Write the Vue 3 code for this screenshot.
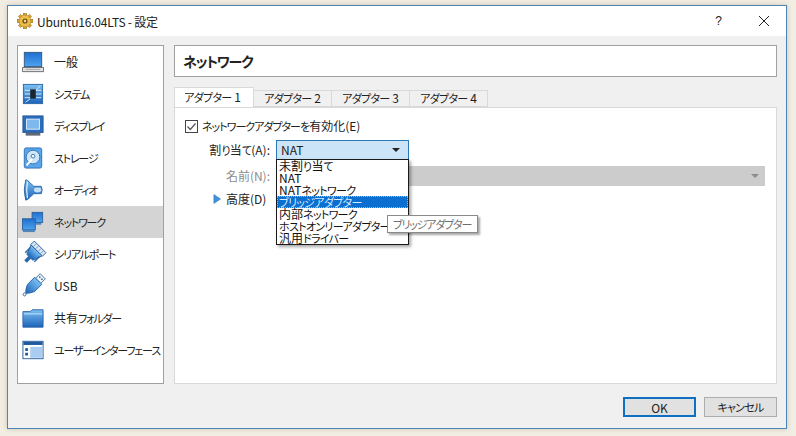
<script setup>
const sections = [
  { id: 'general', label: '一般' },
  { id: 'system', label: 'システム' },
  { id: 'display', label: 'ディスプレイ' },
  { id: 'storage', label: 'ストレージ' },
  { id: 'audio', label: 'オーディオ' },
  { id: 'network', label: 'ネットワーク', active: true },
  { id: 'serial', label: 'シリアルポート' },
  { id: 'usb', label: 'USB' },
  { id: 'shared', label: '共有フォルダー' },
  { id: 'ui', label: 'ユーザーインターフェース' }
]
const tabs = ['アダプター 1', 'アダプター 2', 'アダプター 3', 'アダプター 4']
const options = ['未割り当て', 'NAT', 'NATネットワーク', 'ブリッジアダプター', '内部ネットワーク', 'ホストオンリーアダプター', '汎用ドライバー']

// kana is much narrower than kanji in the original UI font
const runs = (text) => text.match(/[\u3040-\u30ff]+|[^\u3040-\u30ff]+/g).map((t) => ({ t, kana: /[\u3040-\u30ff]/.test(t) }))
</script>

<template>
  <div class="desktop">
    <div class="window">
      <div class="titlebar">
        <svg class="gear" viewBox="0 0 16 16">
          <g fill="#e2a62a" stroke="#8a5f14" stroke-width=".5">
            <rect x="6.4" y="0.2" width="3.2" height="3" />
            <rect x="6.4" y="12.8" width="3.2" height="3" />
            <rect x="0.2" y="6.4" width="3" height="3.2" />
            <rect x="12.8" y="6.4" width="3" height="3.2" />
            <rect x="2" y="2" width="3" height="3" transform="rotate(45 3.5 3.5)" />
            <rect x="11" y="2" width="3" height="3" transform="rotate(45 12.5 3.5)" />
            <rect x="2" y="11" width="3" height="3" transform="rotate(45 3.5 12.5)" />
            <rect x="11" y="11" width="3" height="3" transform="rotate(45 12.5 12.5)" />
          </g>
          <circle cx="8" cy="8" r="6" fill="#edbd4a" stroke="#a87a1e" stroke-width=".6" />
          <circle cx="8" cy="8" r="2.6" fill="#7a5416" />
          <circle cx="8" cy="8" r="1.2" fill="#f0dfae" />
        </svg>
        <span class="title">Ubuntu16.04LTS - 設定</span>
        <span class="help">?</span>
        <svg class="close" viewBox="0 0 12 12">
          <path d="M1 1 L11 11 M11 1 L1 11" stroke="#222" stroke-width="1" fill="none" />
        </svg>
      </div>

      <div class="body">
        <div class="main">
          <ul class="sidebar">
            <li v-for="s in sections" :key="s.id" class="side-row" :class="{ active: s.active }">
              <svg class="side-icon" viewBox="0 0 24 24">
                <defs>
                  <linearGradient :id="'g-' + s.id" x1="0" y1="0" x2="0" y2="1">
                    <stop offset="0" stop-color="#7cc0f2" />
                    <stop offset="1" stop-color="#1c62b8" />
                  </linearGradient>
                  <linearGradient :id="'s-' + s.id" x1="0" y1="0" x2="0" y2="1">
                    <stop offset="0" stop-color="#1f6fd0" />
                    <stop offset="1" stop-color="#4da3f0" />
                  </linearGradient>
                </defs>
                <template v-if="s.id === 'general'">
                  <rect x="2.5" y="1.5" width="19" height="15.5" :fill="'url(#s-' + s.id + ')'" stroke="#35587c" />
                  <path d="M.5 18 H23.5 V22.5 H.5 Z" fill="#e2e4e5" stroke="#666" />
                  <path d="M4 20 H20" stroke="#9a9fa4" />
                </template>
                <template v-else-if="s.id === 'system'">
                  <rect x="1.5" y="1.5" width="21" height="21" :fill="'url(#g-' + s.id + ')'" stroke="#2a66a8" />
                  <path d="M3 8 H9 M3 12 H9 M3 16 H9 M15 8 H21 M15 12 H21 M15 16 H21 M15 8 L20 3 M9 17 L4 21" stroke="#e4f2fc" stroke-width="1" />
                  <rect x="9" y="7" width="6" height="10" fill="#1c2630" />
                </template>
                <template v-else-if="s.id === 'display'">
                  <rect x="1" y="1" width="22" height="18" fill="#2a6cc0" stroke="#26568e" />
                  <rect x="5" y="4.5" width="14" height="11" fill="#7db8ee" stroke="#e8f2fb" />
                  <path d="M4 19.5 H20 V22.5 H4 Z" fill="#5f6a76" />
                </template>
                <template v-else-if="s.id === 'storage'">
                  <rect x="2.5" y="1" width="19" height="22" rx="2" fill="#5aa6ea" stroke="#2a6cb0" />
                  <circle cx="12" cy="11" r="7.5" fill="#cfe6f8" stroke="#2c6fb2" />
                  <circle cx="12" cy="10" r="2" fill="#fff" stroke="#2c6fb2" />
                  <path d="M5 20 L11 13" stroke="#fff" stroke-width="2.2" />
                </template>
                <template v-else-if="s.id === 'audio'">
                  <path d="M4 1 C7 1 11 7 13 8 H21 Q23 12 21 16 H13 C11 17 7 23 4 23 Q1 12 4 1 Z" :fill="'url(#g-' + s.id + ')'" stroke="#2a66a8" />
                  <path d="M6 3 Q4 12 6 21" stroke="#cfe6f8" stroke-width="1.5" fill="none" />
                  <ellipse cx="17" cy="12" rx="4" ry="2.6" fill="#c5e0f6" />
                </template>
                <template v-else-if="s.id === 'network'">
                  <rect x="11" y="1.5" width="11.5" height="11" :fill="'url(#s-' + s.id + ')'" stroke="#2a5f9a" />
                  <rect x=".5" y="8.5" width="14" height="12" :fill="'url(#s-' + s.id + ')'" stroke="#2a5f9a" />
                  <path d="M1 20.5 H14 V23 H1 Z" fill="#4f86be" />
                  <path d="M15 13 H21 V15 H15 Z" fill="#4f86be" />
                </template>
                <template v-else-if="s.id === 'serial'">
                  <g transform="rotate(45 12 12)">
                    <rect x="3" y="1" width="18" height="5.5" fill="#dbe7f1" stroke="#2a66a8" />
                    <path d="M6.5 1.5 V6 M10 1.5 V6 M14 1.5 V6 M17.5 1.5 V6" stroke="#5a86b0" stroke-width=".8" />
                    <path d="M3.5 6.5 H20.5 L16.5 17 H7.5 Z" :fill="'url(#g-' + s.id + ')'" stroke="#2a66a8" />
                    <rect x="10" y="17" width="4" height="6.5" fill="#2a66a8" />
                    <path d="M5 9 V17 M19 9 V17" stroke="#2a66a8" stroke-width="1.6" />
                  </g>
                </template>
                <template v-else-if="s.id === 'usb'">
                  <g transform="rotate(45 12 12)">
                    <rect x="8" y="-3" width="8" height="7" fill="#f2f5f8" stroke="#44709c" />
                    <rect x="9.5" y="-1" width="1.8" height="1.8" fill="#44709c" />
                    <rect x="12.7" y="-1" width="1.8" height="1.8" fill="#44709c" />
                    <path d="M6.5 4 H17.5 V15 Q15 21 12 23 Q9 21 6.5 15 Z" :fill="'url(#g-' + s.id + ')'" stroke="#2a66a8" />
                    <circle cx="12" cy="25" r="1.6" fill="#fff" stroke="#2a66a8" />
                  </g>
                </template>
                <template v-else-if="s.id === 'shared'">
                  <path d="M1 5 V22 H23 V3 H11 L9 5 Z" :fill="'url(#g-' + s.id + ')'" stroke="#2a66a8" />
                  <path d="M2 7.5 H22" stroke="#cfe8fa" stroke-width="1" />
                </template>
                <template v-else>
                  <rect x="1" y="2.5" width="22" height="19" fill="#fff" stroke="#1f5a9e" />
                  <rect x="1.5" y="3" width="21" height="3.5" fill="#1f5a9e" />
                  <rect x="9" y="8.5" width="13" height="12" fill="#a9cdf2" />
                  <rect x="3.5" y="10" width="3" height="3" fill="#1f5a9e" />
                  <rect x="3.5" y="15" width="3" height="3" fill="#1f5a9e" />
                </template>
              </svg>
              <span class="side-label"><span v-for="r in runs(s.label)" :key="r.t" :class="{ kana: r.kana }">{{ r.t }}</span></span>
            </li>
          </ul>

          <div class="content">
            <div class="page-title">ネットワーク</div>
            <div class="tabs">
              <div v-for="(t, i) in tabs" :key="t" class="tab" :class="{ current: i === 0 }">
                <span v-for="r in runs(t)" :key="r.t" :class="{ kana: r.kana }">{{ r.t }}</span>
              </div>
            </div>
            <div class="pane">
              <label class="enable">
                <svg class="check" viewBox="0 0 13 13">
                  <rect x=".5" y=".5" width="12" height="12" fill="#fff" stroke="#444" />
                  <path d="M2.5 6.5 L5.3 9.5 L10.5 3.5" fill="none" stroke="#555" stroke-width="1.2" />
                </svg>
                <span class="lift"><span class="kana">ネットワークアダプターを</span>有効化(E)</span>
              </label>
              <div class="field attach">
                <span class="field-label">割<span class="kana">り</span>当<span class="kana">て</span>(A):</span>
                <div class="combo">
                  <span class="lift">NAT</span>
                  <i class="caret"></i>
                </div>
              </div>
              <div class="field name">
                <span class="field-label muted">名前(N):</span>
                <div class="combo-off"><i class="caret off"></i></div>
              </div>
              <div class="advanced">
                <svg class="tri" viewBox="0 0 9 11">
                  <path d="M1 .5 L8.5 5.5 L1 10.5 Z" fill="#3f93dc" stroke="#2a6fb0" stroke-width=".6" />
                </svg>
                <span class="lift">高度(D)</span>
              </div>

              <ul class="dropdown">
                <li v-for="(o, i) in options" :key="o" :class="{ hover: i === 3 }">
                  <span v-for="(r, j) in runs(o)" :key="j" :class="{ kana: r.kana }">{{ r.t }}</span>
                </li>
              </ul>
              <div class="tooltip"><span class="kana">ブリッジアダプター</span></div>
            </div>
          </div>
        </div>

        <div class="buttons">
          <button class="btn default">OK</button>
          <button class="btn"><span class="kana">キャンセル</span></button>
        </div>
      </div>
    </div>
  </div>
</template>

<style>
html, body {
  margin: 0;
  background: #f3eee4;
}
</style>

<style scoped>
.desktop {
  width: 796px;
  height: 436px;
  box-sizing: border-box;
  padding: 5px 9px 7px 7px;
  background: #f3eee4;
  font-family: "Noto Sans CJK JP", "Liberation Sans", sans-serif;
  font-feature-settings: "palt";
  font-size: 12px;
  color: #222;
  overflow: hidden;
}
.kana {
  font-size: 11px;
  letter-spacing: -0.7px;
}
.lift {
  padding-bottom: 2px;
}
.window {
  height: 100%;
  box-sizing: border-box;
  border: 1px solid #4a86b8;
  background: #f0f0f0;
  display: flex;
  flex-direction: column;
  box-shadow: 0 0 5px rgba(110, 95, 65, 0.3);
}
.titlebar {
  height: 30px;
  flex: none;
  background: #fff;
  display: flex;
  align-items: center;
  padding-left: 9px;
}
.gear {
  width: 16px;
  height: 16px;
  margin-right: 4px;
}
.title {
  flex: 1;
  font-size: 12px;
  letter-spacing: -0.2px;
}
.help {
  font-family: "Liberation Sans", sans-serif;
  font-size: 12px;
  margin-right: 36px;
}
.close {
  width: 12px;
  height: 12px;
  margin-right: 16px;
}
.body {
  flex: 1;
  display: flex;
  flex-direction: column;
  padding: 9px 9px 11px;
  min-height: 0;
}
.main {
  flex: 1;
  display: flex;
  gap: 10px;
  min-height: 0;
}
.sidebar {
  list-style: none;
  margin: 0;
  padding: 0;
  width: 147px;
  box-sizing: border-box;
  flex: none;
  background: #fff;
  border: 1px solid #a0a0a0;
}
.side-row {
  height: 32px;
  display: flex;
  align-items: center;
  padding-left: 4px;
}
.side-row.active {
  background: #d4d4d4;
}
.side-icon {
  width: 22px;
  height: 22px;
  flex: none;
  margin-right: 10px;
  overflow: visible;
}
.side-label {
  font-size: 12px;
  white-space: nowrap;
  padding-bottom: 2px;
}
.side-label .kana {
  letter-spacing: -1.2px;
}
.content {
  flex: 1;
  display: flex;
  flex-direction: column;
  min-width: 0;
}
.page-title {
  height: 32px;
  box-sizing: border-box;
  background: #fff;
  border: 1px solid #a0a0a0;
  display: flex;
  align-items: center;
  padding-left: 8px;
  font-size: 14px;
  font-weight: 700;
  letter-spacing: -1.2px;
  flex: none;
}
.tabs {
  display: flex;
  margin-top: 11px;
  height: 19px;
  flex: none;
  align-items: flex-end;
  position: relative;
  z-index: 1;
}
.tab {
  width: 78px;
  height: 17px;
  box-sizing: border-box;
  background: #f0f0f0;
  border: 1px solid #d9d9d9;
  border-left: none;
  text-align: center;
  font-size: 12px;
  line-height: 14px;
  white-space: nowrap;
}
.tab.current {
  width: 80px;
  height: 20px;
  padding-right: 3px;
  background: #fff;
  border: 1px solid #d9d9d9;
  border-bottom: none;
  line-height: 17px;
}
.pane {
  flex: 1;
  position: relative;
  background: #fff;
  border: 1px solid #d9d9d9;
  box-sizing: border-box;
  padding: 10px 11px 0 10px;
}
.enable {
  display: flex;
  align-items: center;
  gap: 4px;
  height: 16px;
  font-size: 12px;
}
.enable .kana {
  letter-spacing: -1px;
}
.check {
  width: 13px;
  height: 13px;
}
.field {
  display: flex;
  align-items: center;
  height: 20px;
}
.attach {
  margin-top: 6px;
}
.name {
  margin-top: 6px;
}
.field-label {
  width: 91px;
  flex: none;
  text-align: right;
  padding: 0 6px 2px 0;
  box-sizing: border-box;
  font-size: 12px;
  white-space: nowrap;
}
.muted {
  color: #8c8c8c;
}
.combo {
  width: 133px;
  height: 20px;
  box-sizing: border-box;
  border: 1px solid #2a7ab8;
  background: #cce4f7;
  display: flex;
  align-items: center;
  justify-content: space-between;
  padding: 0 8px 0 4px;
  font-size: 12px;
}
.combo-off {
  flex: 1;
  height: 20px;
  background: #cccccc;
  display: flex;
  align-items: center;
  justify-content: flex-end;
  padding-right: 6px;
}
.caret {
  width: 0;
  height: 0;
  border-left: 4px solid transparent;
  border-right: 4px solid transparent;
  border-top: 4px solid #222;
}
.caret.off {
  border-top-color: #8c8c8c;
}
.advanced {
  display: flex;
  align-items: center;
  margin-top: 5px;
  padding-left: 28px;
  gap: 5px;
  height: 16px;
  font-size: 12px;
}
.tri {
  width: 8px;
  height: 10px;
}
.dropdown {
  position: absolute;
  left: 101px;
  top: 51px;
  width: 133px;
  height: 86px;
  margin: 0;
  padding: 0;
  list-style: none;
  box-sizing: border-box;
  background: #fff;
  border: 1px solid #1a1a1a;
  box-shadow: 2px 2px 3px rgba(0, 0, 0, 0.35);
  font-size: 12px;
  color: #111;
}
.dropdown li {
  height: 12px;
  line-height: 12px;
  padding-left: 2px;
  white-space: nowrap;
}
.dropdown li.hover {
  background: #0a6fd0;
  color: #d8ecff;
  outline: 1px dotted #8fc0ee;
  outline-offset: -1px;
}
.tooltip {
  position: absolute;
  left: 212px;
  top: 107px;
  width: 91px;
  height: 18px;
  box-sizing: border-box;
  background: #fff;
  border: 1px solid #8a8a8a;
  box-shadow: 2px 2px 2px rgba(0, 0, 0, 0.35);
  color: #6e6e6e;
  font-size: 12px;
  line-height: 15px;
  padding-left: 5px;
  white-space: nowrap;
}
.tooltip .kana {
  letter-spacing: -1.2px;
}
.buttons {
  flex: none;
  display: flex;
  justify-content: flex-end;
  gap: 8px;
  margin-top: 13px;
}
.btn {
  width: 73px;
  height: 20px;
  box-sizing: border-box;
  background: #e1e1e1;
  border: 1px solid #adadad;
  padding: 0 0 1px;
  font-family: inherit;
  font-feature-settings: inherit;
  font-size: 12px;
  color: #222;
}
.btn.default {
  border: 2px solid #0f6fc0;
}
</style>
